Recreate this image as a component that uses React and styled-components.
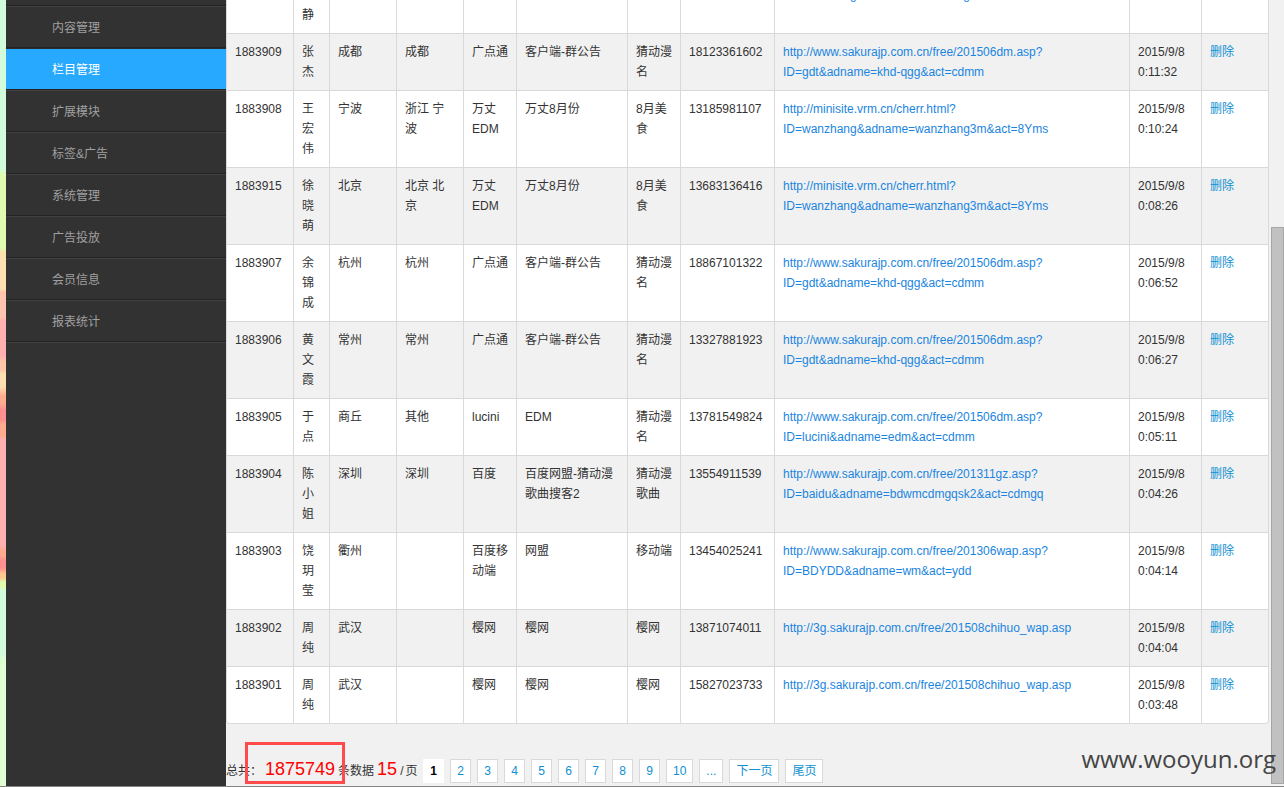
import React from 'react';
import styled, { createGlobalStyle } from 'styled-components';

const Global = createGlobalStyle`
  *, *::before, *::after { box-sizing: border-box; }
  body {
    margin: 0;
    background: #f1f1f1;
    color: #333;
    font: 12px/20px "Liberation Sans", "Noto Sans CJK SC", sans-serif;
  }
  a { color: #0e90d2; text-decoration: none; }
`;

const Shell = styled.div`
  display: flex;
  flex-direction: column;
  height: 100vh;
  overflow: hidden;
`;

const Body = styled.div`
  display: flex;
  flex: 1;
  min-height: 0;
`;

const Wallpaper = styled.div`
  flex: 0 0 6px;
  background: linear-gradient(
    #d3fcdb 0 170px, #dffcb0 174px 248px, #fde0b0 252px 289px,
    #ffc4b0 292px 317px, #ffb0b0 321px 356px, #ffc8a8 362px 370px,
    #fde0b0 374px 387px, #ffab90 396px 404px, #ff9090 410px 420px,
    #ffab90 424px 436px, #ffb0b0 440px 546px, #ffab90 550px 556px,
    #ff9090 560px 568px, #ffc890 574px 578px, #dffcb0 582px 587px,
    #d3fcdb 590px 654px, #dfffd3 660px
  );
`;

const Sidebar = styled.nav`
  flex: 0 0 220px;
  background: #323232;
`;

const Menu = styled.ul`
  list-style: none;
  margin: 0;
  padding: 5px 0 0;
`;

const MenuItem = styled.li`
  border-top: 1px solid #242424;
  &:last-child { border-bottom: 1px solid #242424; box-shadow: 0 1px #404040; }
`;

const MenuLink = styled.a`
  display: block;
  height: 41px;
  padding-left: 46px;
  border-top: 1px solid ${(p) => (p.$active ? '#2c2c2c' : '#404040')};
  background: ${(p) => (p.$active ? '#27a9ff' : 'transparent')};
  color: ${(p) => (p.$active ? '#fff' : '#a0a0a0')};
  line-height: 42px;
`;

const Main = styled.main`
  display: flex;
  flex: 1;
  flex-direction: column;
  justify-content: flex-end;
  min-width: 0;
  overflow: hidden;
`;

const TableFrame = styled.div`
  flex: none;
  margin-right: 1px;
  border: 1px solid #d9d9d9;
  border-top: 0;
  border-radius: 0 0 4px 4px;
  overflow: hidden;
`;

const Table = styled.table`
  width: 100%;
  border-collapse: separate;
  border-spacing: 0;
  table-layout: fixed;
`;

const Row = styled.tr`
  background: #fff;
  &:nth-child(even) { background: #f1f1f1; }
`;

const Cell = styled.td`
  padding: 8px;
  border-right: 1px solid #d9d9d9;
  border-top: 1px solid #d9d9d9;
  vertical-align: top;
  &:last-child { border-right: 0; }
`;

const SourceLink = styled.a`
  color: #1a85e0;
`;

const Pager = styled.div`
  display: flex;
  flex: none;
  align-items: center;
  height: 26px;
  margin: 34px 0 2px;
  white-space: nowrap;
`;

const Label = styled.span`
  margin-right: ${(p) => p.$gap || 0}px;
`;

const Total = styled.strong`
  margin-right: ${(p) => p.$gap || 0}px;
  color: #f00;
  font-size: 18px;
  font-weight: 400;
`;

const Highlight = styled.div`
  position: absolute;
  left: 19px;
  bottom: 0;
  width: 100px;
  height: 42px;
  border: 3px solid #ff4b4b;
`;

const Summary = styled.div`
  position: relative;
  display: flex;
  align-items: baseline;
  align-self: stretch;
  width: 197px;
  padding-top: 1px;
`;

const Pages = styled.nav`
  display: flex;
  gap: 6px;
`;

const PageLink = styled.a`
  min-width: 21px;
  height: 24px;
  padding: 0 6px;
  border: 1px solid ${(p) => (p.$current ? '#fff' : '#d9d9d9')};
  background: #fff;
  color: ${(p) => (p.$current ? '#000' : '#0e90d2')};
  font-weight: ${(p) => (p.$current ? 700 : 400)};
  line-height: 22px;
  text-align: center;
`;

const Track = styled.div`
  display: flex;
  flex: 0 0 14px;
  flex-direction: column;
  justify-content: flex-end;
  padding: 0 0 2px 1px;
  background: #f1f1f1;
`;

const Thumb = styled.div`
  height: 71%;
  border: 1px solid #a6a6a6;
  background: #c1c1c1;
`;

const Taskbar = styled.div`
  flex: 0 0 1px;
  background: #858585;
`;

const Watermark = styled.div`
  position: absolute;
  right: 8px;
  bottom: 12px;
  color: #444;
  font-family: "Open Sans", sans-serif;
  font-size: 24px;
  line-height: 32px;
`;

const menu = ['内容管理', '栏目管理', '扩展模块', '标签&广告', '系统管理', '广告投放', '会员信息', '报表统计'];

const dm = 'http://www.sakurajp.com.cn/free/201506dm.asp?';
const gdt = dm + ' ID=gdt&adname=khd-qgg&act=cdmm';
const wanzhang = 'http://minisite.vrm.cn/cherr.html? ID=wanzhang&adname=wanzhang3m&act=8Yms';
const chihuo = 'http://3g.sakurajp.com.cn/free/201508chihuo_wap.asp';

const rows = [
  ['', '王汪静', '', '海南 海口', '', '', '8月美食', '', wanzhang, '', ''],
  ['1883909', '张杰', '成都', '成都', '广点通', '客户端-群公告', '猜动漫名', '18123361602', gdt, '2015/9/8 0:11:32', '删除'],
  ['1883908', '王宏伟', '宁波', '浙江 宁波', '万丈 EDM', '万丈8月份', '8月美食', '13185981107', wanzhang, '2015/9/8 0:10:24', '删除'],
  ['1883915', '徐晓萌', '北京', '北京 北京', '万丈 EDM', '万丈8月份', '8月美食', '13683136416', wanzhang, '2015/9/8 0:08:26', '删除'],
  ['1883907', '余锦成', '杭州', '杭州', '广点通', '客户端-群公告', '猜动漫名', '18867101322', gdt, '2015/9/8 0:06:52', '删除'],
  ['1883906', '黄文霞', '常州', '常州', '广点通', '客户端-群公告', '猜动漫名', '13327881923', gdt, '2015/9/8 0:06:27', '删除'],
  ['1883905', '于点', '商丘', '其他', 'lucini', 'EDM', '猜动漫名', '13781549824', dm + ' ID=lucini&adname=edm&act=cdmm', '2015/9/8 0:05:11', '删除'],
  ['1883904', '陈小姐', '深圳', '深圳', '百度', '百度网盟-猜动漫歌曲搜客2', '猜动漫歌曲', '13554911539', 'http://www.sakurajp.com.cn/free/201311gz.asp? ID=baidu&adname=bdwmcdmgqsk2&act=cdmgq', '2015/9/8 0:04:26', '删除'],
  ['1883903', '饶玥莹', '衢州', '', '百度移动端', '网盟', '移动端', '13454025241', 'http://www.sakurajp.com.cn/free/201306wap.asp? ID=BDYDD&adname=wm&act=ydd', '2015/9/8 0:04:14', '删除'],
  ['1883902', '周纯', '武汉', '', '樱网', '樱网', '樱网', '13871074011', chihuo, '2015/9/8 0:04:04', '删除'],
  ['1883901', '周纯', '武汉', '', '樱网', '樱网', '樱网', '15827023733', chihuo, '2015/9/8 0:03:48', '删除'],
];

const columns = [67, 36, 67, 67, 53, 111, 53, 94, null, 72, 66];
const pages = ['1', '2', '3', '4', '5', '6', '7', '8', '9', '10', '...', '下一页', '尾页'];

export default function App() {
  return (
    <>
      <Global />
      <Shell>
        <Body>
          <Wallpaper />
          <Sidebar>
            <Menu>
              {menu.map((name) => (
                <MenuItem key={name}>
                  <MenuLink href="#" $active={name === '栏目管理'}>{name}</MenuLink>
                </MenuItem>
              ))}
            </Menu>
          </Sidebar>
          <Main>
            <TableFrame>
              <Table>
                <colgroup>
                  {columns.map((w, i) => <col key={i} width={w || undefined} />)}
                </colgroup>
                <tbody>
                  {rows.map((r, n) => (
                    <Row key={n}>
                      {r.slice(0, 8).map((text, i) => <Cell key={i}>{text}</Cell>)}
                      <Cell><SourceLink href="#">{r[8]}</SourceLink></Cell>
                      <Cell>{r[9]}</Cell>
                      <Cell>{r[10] && <a href="#">{r[10]}</a>}</Cell>
                    </Row>
                  ))}
                </tbody>
              </Table>
            </TableFrame>
            <Pager>
              <Summary>
                <Label $gap={3}>总共：</Label>
                <Total $gap={3}>1875749</Total>
                <Label $gap={3}>条数据</Label>
                <Total $gap={3}>15</Total>
                <Label $gap={2}>/</Label>
                <Label>页</Label>
                <Highlight />
              </Summary>
              <Pages>
                {pages.map((p) => (
                  <PageLink key={p} href="#" $current={p === '1'}>{p}</PageLink>
                ))}
              </Pages>
            </Pager>
          </Main>
          <Track><Thumb /></Track>
        </Body>
        <Taskbar />
      </Shell>
      <Watermark>www.wooyun.org</Watermark>
    </>
  );
}
